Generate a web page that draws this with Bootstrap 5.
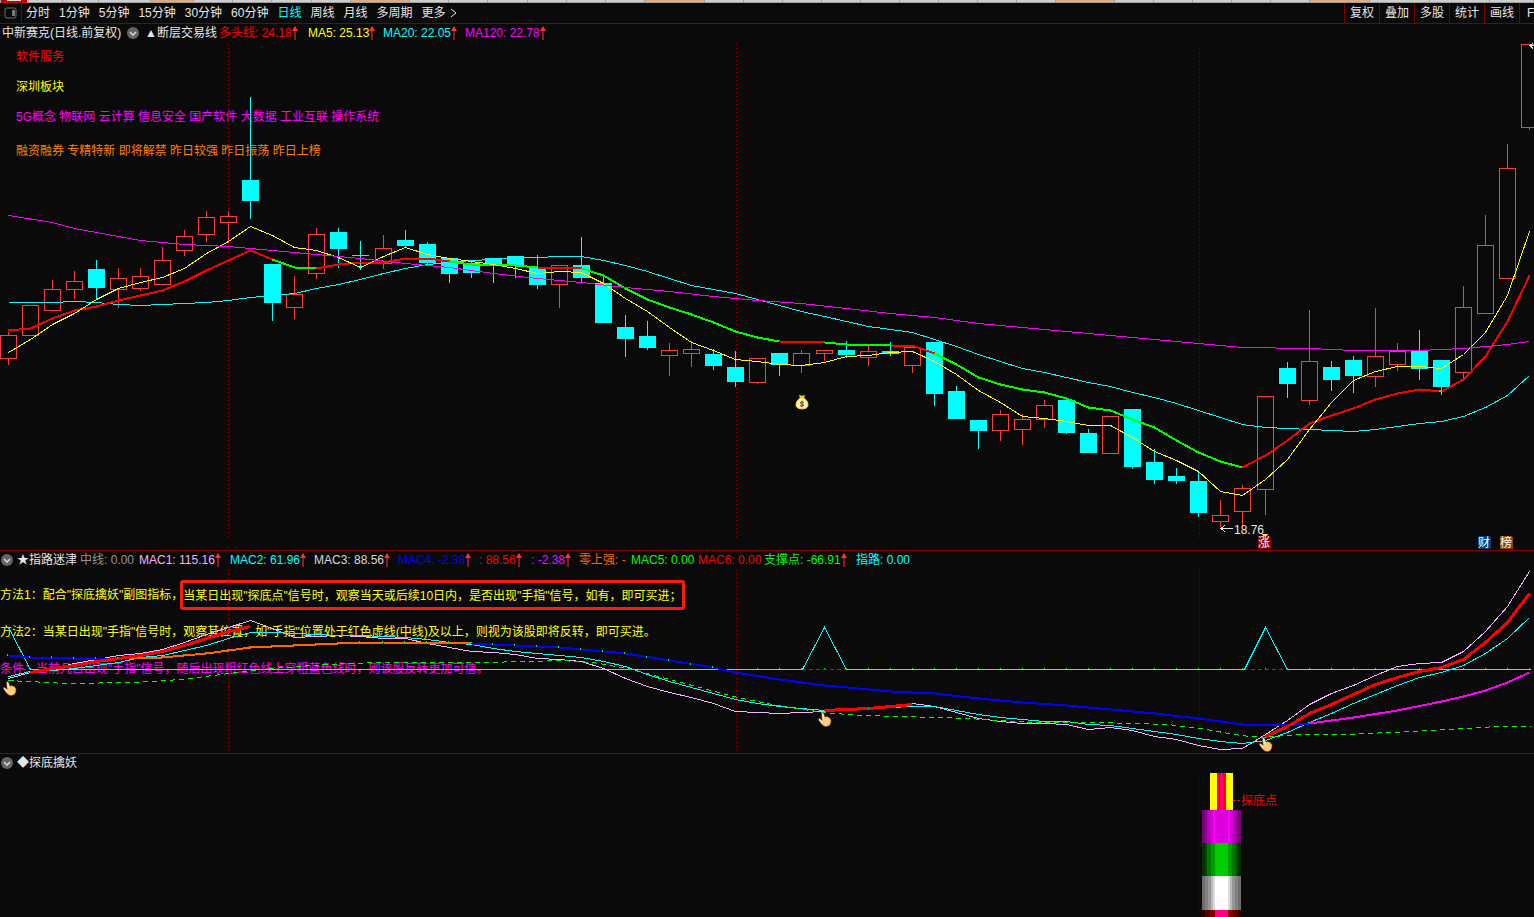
<!DOCTYPE html>
<html lang="zh-CN">
<head>
<meta charset="utf-8">
<meta name="viewport" content="width=device-width, initial-scale=1">
<title>中新赛克 日线</title>
<link href="https://cdn.jsdelivr.net/npm/bootstrap@5.3.0/dist/css/bootstrap.min.css" rel="stylesheet">
<style>
  body { background:#0a0a0a; color:#e6e6e6; font:12px/18px "Liberation Sans","Noto Sans CJK SC",sans-serif; overflow-x:hidden; }
  svg { display:block; }
  .tab-strip, .plot { width:100%; height:auto; }
  .plot { shape-rendering:crispEdges; fill:none; }
  .toolbar { height:21px; border-bottom:1px solid #800000; line-height:20px; }
  .toolbar button, .fold { background:none; border:0; padding:0; color:inherit; line-height:inherit; }
  .toolbar .layout-btn { width:22px; padding-left:4px; border-right:1px solid #800000; }
  .periods { gap:9px; padding-left:4px; }
  .periods .current { color:#0ff; }
  .tools button { width:35px; border-left:1px solid #800000; }
  .tools .cut { width:15px; padding-left:7px; text-align:left; }
  .legend-row { display:grid; height:18px; white-space:nowrap; }
  .legend-row > span { display:flex; align-items:center; }
  .fold { display:flex; align-items:center; }
  .legend-main { padding-left:2px; grid-template-columns:125px 18px 74px 89px 75px 82px auto; }
  .legend-guide { padding-left:1px; grid-template-columns:16px 63px 59px 91px 84px 84px 81px 52px 48px 52px 67px 66px 92px auto; }
  .legend-probe { padding-left:1px; grid-template-columns:16px auto; }
  .pane { border-bottom:1px solid #800000; }
  .pane:last-child { border-bottom:0; }
  .layers { display:grid; }
  .layers > * { grid-area:1/1; min-width:0; }
  .tags { padding:6px 0 0 16px; display:flex; flex-direction:column; gap:12px; white-space:nowrap; }
  .tags p, .hints p { margin:0; }
  .tags p:last-child { padding-top:4px; }
  .hints { padding-top:11px; display:flex; flex-direction:column; gap:7px; white-space:nowrap; line-height:30px; }
  .hints p { height:30px; }
  .boxed { display:inline-block; line-height:26px; height:30px; border:3px solid #ff1a0c; border-radius:3px; margin-left:-3px; vertical-align:top; }
  .c-red { color:#f00; } .c-yellow { color:#ff0; } .c-cyan { color:#0ff; } .c-magenta { color:#f0f; }
  .c-orange { color:#ff8000; } .c-flame { color:#ff6400; } .c-lilac { color:#f0b4ff; } .c-silver { color:#d8d8d8; }
  .c-grey { color:#969696; } .c-blue { color:#00f; } .c-lime { color:#0f0; }
</style>
</head>
<body>
<svg class="tab-strip" id="strip" viewBox="0 0 1534 3" aria-hidden="true"></svg>

<svg width="0" height="0" class="position-absolute" aria-hidden="true">
  <symbol id="up" viewBox="0 0 6 14"><path d="M3 1v13" stroke="#ff3232" stroke-width="1"/><path d="M3 0L6 5H0Z" fill="#ff3232"/></symbol>
  <symbol id="chev" viewBox="0 0 12 12"><circle cx="6" cy="6" r="6" fill="#646464"/><path d="M3 5l3 3 3-3" fill="none" stroke="#d2d2d2" stroke-width="1.6"/></symbol>
  <symbol id="hand" viewBox="0 0 14 15"><path d="M3.500 1Q4.500 0 5.500 1L7 5Q9 4 10 5Q12 5 12 6.500Q13.500 7 13 10Q12.500 14 9 14.500H7Q5 14 3 11.500L.5 8Q0 6 1.500 6.300L4 8.500Z" fill="#ffcd78" stroke="#6e3214" stroke-width=".6"/><path d="M4.500 1.500L5.500 7M1.500 7.500l3 3" stroke="#fff0d2" stroke-width="1.200" fill="none"/></symbol>
  <symbol id="bag" viewBox="0 0 14 16"><path d="M4 1L7 2L10 1L9 4H5Z" fill="#ffe628" stroke="#9b6e1e" stroke-width=".6"/><path d="M5 4h4q5 4 4 8q-1 3-6 3t-6-3q-1-4 4-8z" fill="#fff096" stroke="#f0d228"/><circle cx="7" cy="10" r="3.600" fill="#f5f0dc"/><path d="M9 8.400Q7 7 5.600 8.300Q5 9.700 7 10Q9.200 10.400 8.400 11.700Q7 12.800 5 11.600M7 6.800v6.400" fill="none" stroke="#6e3c1e"/></symbol>
</svg>

<nav class="toolbar d-flex overflow-hidden text-nowrap">
  <button class="layout-btn flex-shrink-0" aria-label="布局"><svg width="13" height="12" viewBox="0 0 13 12"><rect x="1" y="1" width="11" height="10" rx="2" fill="none" stroke="#6e6e6e"/><path d="M8 3h3v6H8z" fill="#787878"/></svg></button>
  <div class="periods d-flex flex-grow-1">
    <button>分时</button><button>1分钟</button><button>5分钟</button><button>15分钟</button><button>30分钟</button><button>60分钟</button><button class="current">日线</button><button>周线</button><button>月线</button><button>多周期</button>
    <button class="d-flex align-items-center gap-1">更多<svg width="7" height="12" viewBox="0 0 7 12"><path d="M1 2l5 4-5 4" fill="none" stroke="#e6e6e6"/></svg></button>
  </div>
  <div class="tools d-flex flex-shrink-0">
    <button>复权</button><button>叠加</button><button>多股</button><button>统计</button><button>画线</button><button class="cut">F</button>
  </div>
</nav>

<main>
  <section class="pane">
    <div class="legend-row legend-main">
      <span>中新赛克(日线.前复权)</span><button class="fold" aria-label="指标菜单"><svg width="12" height="12"><use href="#chev"/></svg></button><span>▲断层交易线</span>
      <span class="c-red">多头线: 24.18<svg width="6" height="14"><use href="#up"/></svg></span>
      <span class="c-yellow">MA5: 25.13<svg width="6" height="14"><use href="#up"/></svg></span>
      <span class="c-cyan">MA20: 22.05<svg width="6" height="14"><use href="#up"/></svg></span>
      <span class="c-magenta">MA120: 22.78<svg width="6" height="14"><use href="#up"/></svg></span>
    </div>
    <div class="layers">
      <div class="tags">
        <p class="c-red">软件服务</p><p class="c-yellow">深圳板块</p>
        <p class="c-magenta">5G概念 物联网 云计算 信息安全 国产软件 大数据 工业互联 操作系统</p>
        <p class="c-orange">融资融券 专精特新 即将解禁 昨日较强 昨日振荡 昨日上榜</p>
      </div>
      <svg class="plot" id="price" viewBox="0 42 1534 508" role="img" aria-label="日K线图"></svg>
    </div>
  </section>

  <section class="pane">
    <div class="legend-row legend-guide">
      <button class="fold" aria-label="指标菜单"><svg width="12" height="12"><use href="#chev"/></svg></button><span>★指路迷津</span>
      <span class="c-grey">中线: 0.00</span>
      <span class="c-lilac">MAC1: 115.16<svg width="6" height="14"><use href="#up"/></svg></span>
      <span class="c-cyan">MAC2: 61.96<svg width="6" height="14"><use href="#up"/></svg></span>
      <span class="c-silver">MAC3: 88.56<svg width="6" height="14"><use href="#up"/></svg></span>
      <span class="c-blue">MAC4: -2.38<svg width="6" height="14"><use href="#up"/></svg></span>
      <span class="c-red">: 88.56<svg width="6" height="14"><use href="#up"/></svg></span>
      <span class="c-magenta">: -2.38<svg width="6" height="14"><use href="#up"/></svg></span>
      <span class="c-flame">零上强: -</span>
      <span class="c-lime">MAC5: 0.00</span>
      <span class="c-red">MAC6: 0.00</span>
      <span class="c-lime">支撑点: -66.91<svg width="6" height="14"><use href="#up"/></svg></span>
      <span class="c-cyan">指路: 0.00</span>
    </div>
    <div class="layers">
      <div class="hints c-yellow">
        <p>方法1：配合"探底擒妖"副图指标，<span class="boxed">当某日出现"探底点"信号时，观察当天或后续10日内，是否出现"手指"信号，如有，即可买进；</span></p>
        <p>方法2：当某日出现"手指"信号时，观察其位置，如"手指"位置处于红色虚线(中线)及以上，则视为该股即将反转，即可买进。</p>
        <p class="c-magenta">条件：当前几日出现"手指"信号，随后出现粗红色线上穿粗蓝色线时，则该股反转更加可信。</p>
      </div>
      <svg class="plot" id="guide" viewBox="0 569 1534 184" role="img" aria-label="指路迷津指标"></svg>
    </div>
  </section>

  <section class="pane">
    <div class="legend-row legend-probe">
      <button class="fold" aria-label="指标菜单"><svg width="12" height="12"><use href="#chev"/></svg></button><span>◆探底擒妖</span>
    </div>
    <svg class="plot" id="probe" viewBox="0 772 1534 145" role="img" aria-label="探底擒妖指标"></svg>
  </section>
</main>

<script src="https://cdn.jsdelivr.net/npm/bootstrap@5.3.0/dist/js/bootstrap.bundle.min.js"></script>
<script>
const X = i => Math.floor(8.19 + 22.05 * i);
const el = id => document.getElementById(id);
const rect = (x, y, w, h, f) => `<rect x="${x}" y="${y}" width="${w}" height="${h}" fill="${f}"/>`;
const poly = (pts, c, w = 1, extra = '') => `<polyline points="${pts.map(p => (p[0] + .5) + ',' + (p[1] + .5)).join(' ')}" stroke="${c}" stroke-width="${w}" ${extra}/>`;
// series: dense values starting at bar `from`
const dense = (from, ys) => ys.map((y, k) => [X(from + k), y]);
// series: sparse [bar, value] pairs
const sparse = a => a.map(p => [X(p[0]), p[1]]);
const dots = (y1, y2, cols) => [228, 736, 1199].map((x, k) => `<path d="M${x + .5} ${y1}V${y2}" stroke="${cols[k]}" stroke-dasharray="1 3"/>`).join('');

// tab strip
(() => {
  const e = [27,63,99,151,194,233,272,312,351,410,449,488,528,567,606,645,705,744,783,822,861,900,939,978,1017,1056,1115,1154,1193,1232,1271,1310,1370,1430,1490,1534];
  const warm = [151, 351, 645, 1056, 1310];
  let s = rect(0, 0, 1534, 3, '#a0a0a0') + rect(1, 0, 26, 3, '#c80000') + rect(7, 0, 14, 1, '#dcdcdc');
  for (let i = 0; i < e.length - 1; i++) s += rect(e[i], 0, e[i + 1] - e[i] - 1, 2, warm.includes(e[i]) ? '#e6aa78' : '#cdcdcd');
  el('strip').innerHTML = s;
})();

// high, body top, body bottom, low; direction u = rising, d = falling
const bars = `u332,335,358,364 u305,305,335,335 u280,289,310,310 u271,281,289,298 d260,269,287,298 u268,278,289,307 u268,276,288,290 u247,260,284,284 u230,236,250,255 u211,217,234,241
u211,216,222,242 d97,180,200,218 d264,264,302,320 u276,294,307,318 u228,234,273,278 d228,232,248,267 d241,255,255,269 u235,248,263,268 d230,240,245,247 d242,244,262,263
d258,258,273,282 d262,263,272,277 d258,258,264,282 d256,256,265,277 d255,268,284,288 u265,265,284,307 d237,265,277,281 d275,283,322,322 d315,327,338,356 d321,336,347,349
u343,350,355,375 u341,349,353,366 d349,354,365,369 d351,367,381,386 u358,358,382,383 d353,353,364,375 u350,353,365,372 u350,350,353,360 d341,350,354,357 u345,351,357,365
d342,351,353,355 u347,347,365,372 d342,342,393,405 d386,391,418,418 d420,420,430,448 u410,414,430,440 u414,419,429,444 u400,405,419,427 d400,400,432,433 d429,433,452,452
u416,416,453,453 d409,409,466,468 d449,462,479,483 d468,476,480,483 d471,481,512,516 u500,515,521,526 u485,488,511,525 u396,396,489,514 d362,368,383,397 u310,361,400,404
d361,367,379,390 d356,360,375,392 u308,356,376,386 u343,351,364,370 d330,350,368,379 d360,360,386,394 u286,307,372,379 u215,245,313,313 u144,168,278,278 u44,44,127,129`
  .split(/\s+/).map(t => [t[0], ...t.slice(1).split(',').map(Number)]);

(() => {
  let s = dots(44, 540, ['#a00000', '#a00000', '#780000']);
  bars.forEach(([d, h, t, b, l], i) => {
    const x = X(i);
    if (d === 'd') s += rect(x, h, 1, l - h + 1, '#0ff') + rect(x - 8, t, 17, b - t + 1, '#0ff');
    else s += `<path d="M${x + .5} ${h}V${t}M${x + .5} ${b}V${l + 1}M${x - 7.5} ${t + .5}h16V${b + .5}h-16Z" stroke="#ff3c3c"/>`;
  });
  s += poly(dense(0, [302,302,302,301,302,304,305,304,303,302,300,297,295,293,288,284,279,273,268,264,262,260,259,257,257,256,256,260,265,271,278,285,289,293,299,305,311,316,321,326,329,332,339,346,354,361,368,372,377,382,386,392,397,403,410,417,424,427,428,429,430,431,429,426,423,421,416,407,395,375]), '#0ff');
  const trend = [330,328,318,310,306,300,295,290,281,270,260,250,259,267,268,264,262,262,258,258,261,264,264,265,267,267,268,275,288,299,307,314,322,331,337,341,341,342,344,344,345,345,353,364,377,384,389,392,398,407,410,419,427,440,452,461,467,455,440,423,415,408,399,393,389,391,379,356,321,275];
  const cuts = [0,12,14,20,24,26,35,37,40,42,56,69];
  for (let k = 0; k < cuts.length - 1; k++)
    s += poly(dense(cuts[k], trend.slice(cuts[k], cuts[k + 1] + 1)), k % 2 ? '#0f0' : '#f00', 2);
  s += rect(X(65) - 2, 390, 3, 2, '#0f0');
  s += poly(dense(0, [352,339,324,313,299,288,282,277,268,253,241,226,235,247,250,257,267,256,247,254,258,261,264,268,273,271,272,283,298,311,327,342,350,359,361,364,365,362,356,355,352,351,361,374,390,402,416,418,421,425,425,437,451,460,471,491,495,479,459,429,402,380,371,366,366,368,354,332,295,231]), '#ff0');
  s += poly(sparse([[0,215],[2,222],[3,228],[5,236],[6,240],[8,244],[10,246],[11,248],[13,252],[14,254],[16,258],[18,263],[20,267],[22,273],[24,278],[26,282],[28,287],[30,291],[32,296],[34,300],[36,303],[38,308],[40,313],[42,317],[44,323],[46,327],[48,331],[50,335],[52,339],[54,343],[56,347],[59,348],[61,350],[64,350],[66,348],[68,344],[69,341]]), '#f0f');
  s += `<path d="M1221 528.500h12M1225 525l-4 3.500 4 3.500M1534 45.500h-4M1533 43l-3 2.500 3 3" stroke="#e6e6e6"/>
    <text x="1234" y="534" fill="#e6e6e6">18.76</text>`;
  [[1258, '涨', '#820000'], [1478, '财', '#003c78'], [1500, '榜', '#8c4600']].forEach(([x, t, c]) =>
    s += `<path d="M${x} 536h11l2 2v11h-13z" fill="${c}"/><text x="${x}" y="547" fill="#fff">${t}</text>`);
  s += `<path d="M1261 534h7l-2 2h-3z" fill="#ffdc28"/><use href="#bag" x="795" y="394" width="14" height="16" shape-rendering="auto"/>`;
  el('price').innerHTML = s;
})();

(() => {
  let s = dots(570, 752, ['#a00000', '#a00000', '#780000']);
  s += `<path d="M8 669.500h24M802 669.500h44M1244 669.500h44" stroke="#f00" stroke-dasharray="4 3"/>`;
  s += poly([[8,627],[30,669],[802,669],[824,627],[846,669],[1244,669],[1265,627],[1287,669],[1530,669]], '#0ff');
  s += poly(dense(0, [678,672,668,663,659,655,653,649,642,634,627,620,628,637,636,635,636,638,638,643,647,651,652,654,658,659,661,668,678,686,692,697,703,711,712,713,712,711,710,708,706,703,706,712,718,721,723,723,724,729,727,730,736,739,745,749,748,734,720,704,693,685,675,666,663,662,651,631,606,571]), '#f0b4ff');
  s += poly(dense(0, [676,671,670,668,665,662,657,655,650,645,638,632,632,633,634,635,635,636,637,639,642,644,648,651,653,655,657,661,666,674,681,687,693,699,703,706,708,710,709,708,707,706,706,710,714,717,719,721,721,724,725,728,731,734,738,741,743,740,732,722,713,703,694,685,677,672,665,653,638,617]), '#0ff');
  s += poly([[8,680],[66,683],[133,682],[180,679],[213,675],[260,669],[310,665],[350,663],[380,662],[480,662],[527,661],[560,660],[593,662],[627,668],[673,680],[737,697],[777,705],[823,712],[860,715],[937,717],[967,718],[1000,720],[1033,722],[1100,722],[1167,724],[1200,728],[1240,735],[1263,737],[1297,734],[1343,734],[1413,731],[1497,726],[1530,726]], '#0f0', 1, 'stroke-dasharray="5 4"');
  s += poly(sparse([[0,655],[1,657],[3,658],[5,658]]), '#00f', 2);
  s += poly(sparse([[5,658],[7,657],[8,655],[9,653],[10,650],[11,647],[13,645],[15,643],[17,642],[19,642],[21,643]]), '#ff6400', 2);
  s += poly(sparse([[21,643],[23,645],[25,647],[26,649],[28,653],[30,660],[32,667],[33,672],[35,679],[37,685],[39,689],[40,691],[42,693],[44,698],[46,702],[48,705],[50,709],[52,713],[54,718],[56,724],[58,725],[59,723]]), '#00f', 2);
  s += poly(sparse([[59,723],[61,717],[63,710],[65,701],[66,696],[67,690],[68,682],[69,672]]), '#f0f', 2);
  [dense(1, [672,668,665,661,658,655,651,645,638,631,626]), dense(37, [710,709,708,706,704]), dense(57, [736,726,713,704,694,684,677,671,667,659,642,622,593])]
    .forEach(p => s += poly(p, '#f00', 3));
  for (let i = 34; i < 70; i++) s += rect(X(i), 668, 1, 1, '#0f0');
  [655,657,657,658,658,658,657,657,655,653,650,647,646,645,644,643,642,642,642,642,642,643,644,645,646,647,649,651,653,657,660,664,667].forEach((y, i) => s += rect(X(i) - 1, y - 1, 1, 2, '#0f0'));
  [[3, 681], [818, 712], [1259, 737]].forEach(([x, y]) => s += `<use href="#hand" x="${x}" y="${y}" width="14" height="15" shape-rendering="auto"/>`);
  el('guide').innerHTML = s;
})();

(() => {
  let s = dots(773, 917, ['#3c0000', '#3c0000', '#640000']);
  // bands run from the outer edge to the middle and are mirrored
  const tube = (y, h, left, mid) => {
    let x = 1202;
    left.forEach(([w, c]) => { s += rect(x, y, w, h, c) + rect(2443 - x - w, y, w, h, c); x += w; });
    s += rect(x, y, 2443 - 2 * x, h, mid);
  };
  s += rect(1210, 773, 23, 37, '#ff0') + rect(1217, 773, 9, 37, '#f00') + rect(1220, 773, 3, 37, '#ff0082');
  tube(810, 33, [[3,'#780078'],[2,'#910091'],[3,'#b400b4'],[3,'#d200d2'],[2,'#f0f']], '#dc00dc');
  tube(843, 33, [[3,'#003200'],[2,'#004b00'],[4,'#007800'],[4,'#009b00']], '#00cd00');
  tube(876, 34, [[3,'#6e6e6e'],[3,'#828282'],[3,'#969696'],[2,'#b9b9b9'],[2,'#dcdcdc']], '#fff');
  tube(910, 7, [[3,'#320000'],[5,'#5a0000'],[5,'#820000']], '#ff0082');
  s += `<path d="M1233 800.500h7" stroke="#f00" stroke-dasharray="3 1"/><text x="1241" y="805" fill="#f00">探底点</text>`;
  el('probe').innerHTML = s;
})();
</script>
</body>
</html>
